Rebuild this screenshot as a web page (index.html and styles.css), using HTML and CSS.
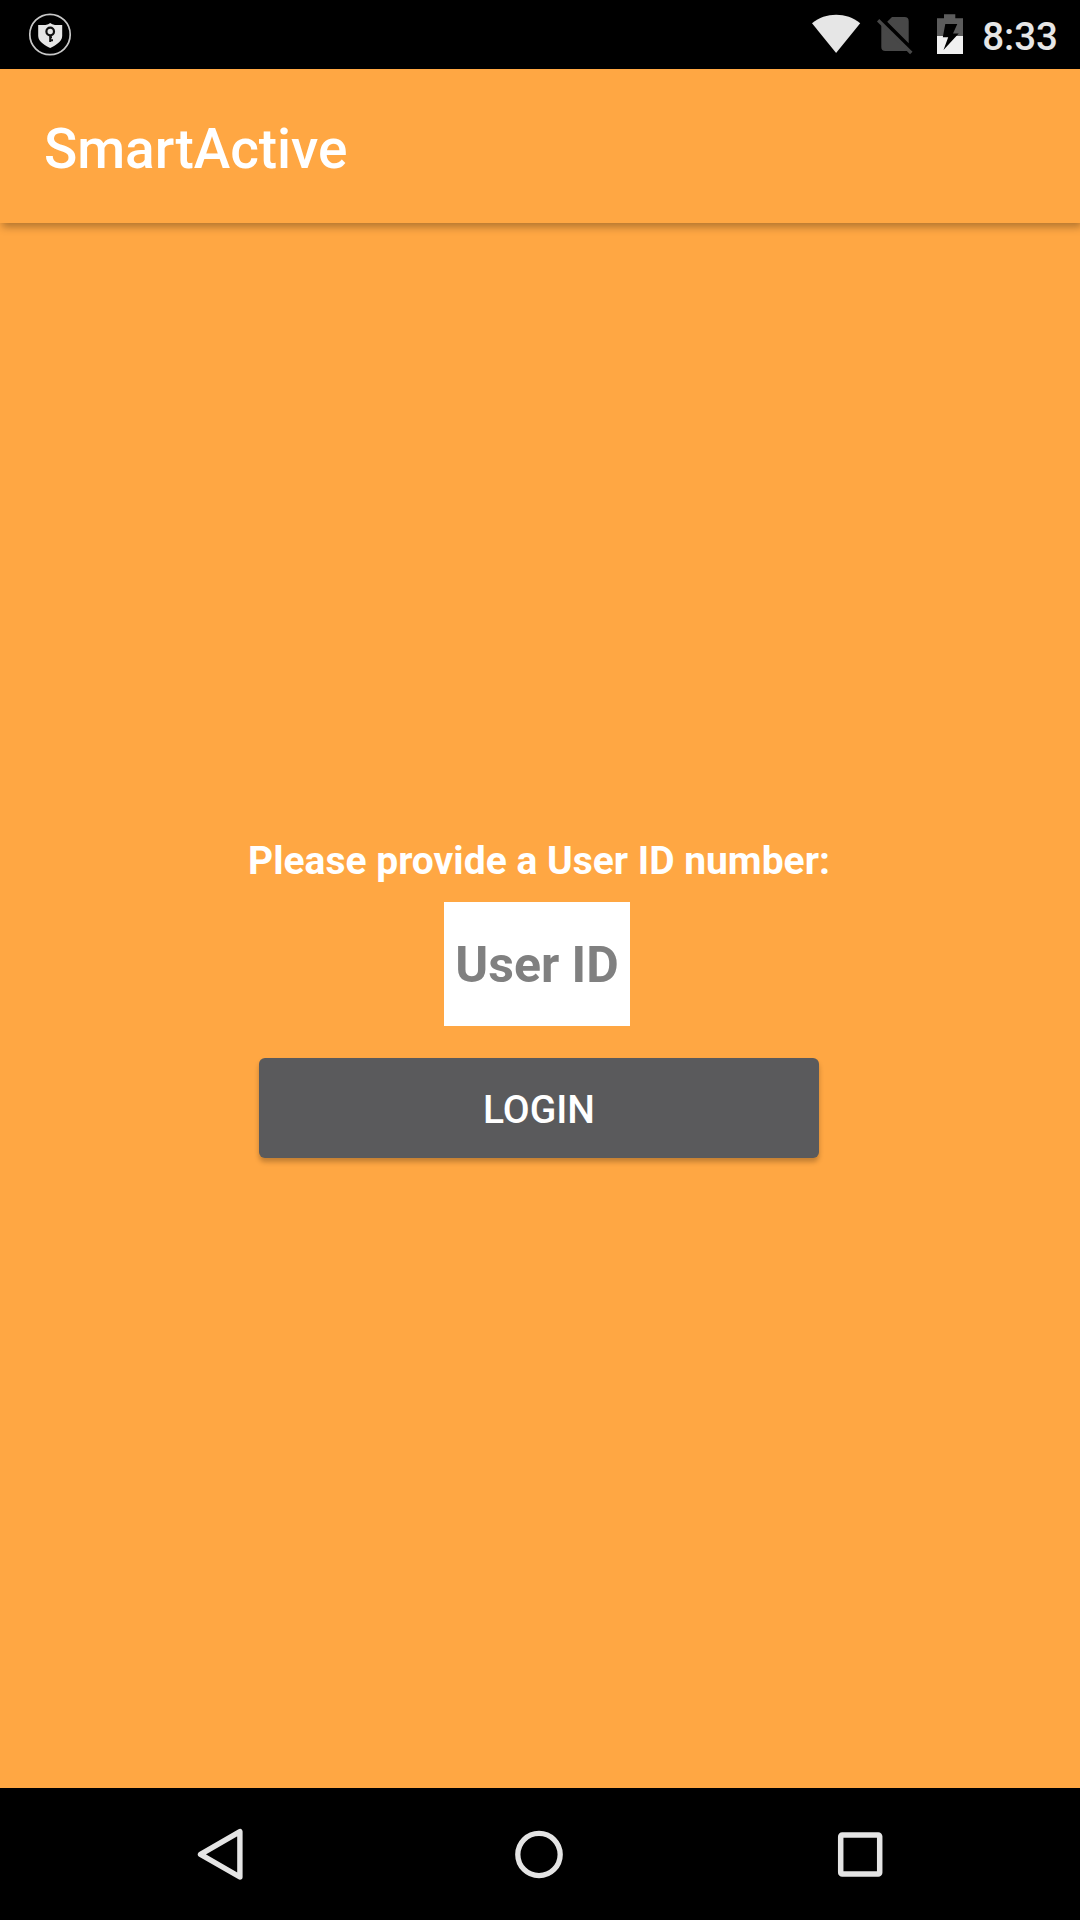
FILE: index.html
```html
<!DOCTYPE html>
<html lang="en">
<head>
<meta charset="utf-8">
<title>SmartActive</title>
<link rel="stylesheet" href="styles.css">
</head>
<body>
<div class="screen">
  <div class="status-bar">
    <svg class="icon-vpn" width="44" height="44" viewBox="28 12 44 44">
      <circle cx="50" cy="34.5" r="20.2" fill="none" stroke="#c8c8c8" stroke-width="1.7"/>
      <path d="M50.2 23 Q52 24.7 55 25 H62.2 V36 C62.2 42 54 46 50.2 48 C46.4 46 38.2 42 38.2 36 V25 H45.5 Q48.5 24.7 50.2 23Z" fill="#e6e6e6"/>
      <circle cx="50.2" cy="31.5" r="3.8" fill="none" stroke="#111" stroke-width="2.2"/>
      <path d="M50.2 35V42M50 40.3H53M50 37.3H52" fill="none" stroke="#111" stroke-width="2"/>
    </svg>
    <div class="status-icons">
      <svg width="49" height="40" viewBox="0 0 49 40">
        <path d="M0 9.2C7 3.5 15.3 .7 24.1 .7S41.2 3.5 48.2 9.2L24.1 39Z" fill="#e6e6e6"/>
      </svg>
      <svg class="icon-sim" width="36" height="40" viewBox="877 15 36 40">
        <path d="M892 17H904.500Q908.700 17 908.700 21.200V43.200L887.200 21.800ZM881.300 23.500 908.500 50.500Q907 51 905 51H885.300Q881.300 51 881.300 47Z" fill="#484848"/>
        <path d="M878.100 20.300 911.300 53" fill="none" stroke="#484848" stroke-width="3.400"/>
      </svg>
      <svg class="icon-battery" width="27" height="40" viewBox="937 14 27 40">
        <path d="M944 14.300H955.300V18.300H963V36H937V18.300H944Z" fill="#5c5c5c"/>
        <path d="M937 36H963V54H937Z" fill="#f0f0f0"/>
        <path d="M945.300 24H957.300L953 33.500H958.700L943.500 50L948.200 37.300H942.800Z" fill="#000"/>
      </svg>
      <span class="clock">8:33</span>
    </div>
  </div>
  <header class="app-bar"><h1 class="app-title">SmartActive</h1></header>
  <main class="content">
    <form class="login-form">
      <label class="prompt" for="user-id">Please provide a User ID number:</label>
      <input class="user-id" id="user-id" type="text" placeholder="User ID">
      <button class="login-button" type="button">LOGIN</button>
    </form>
  </main>
  <nav class="nav-bar">
    <svg width="60" height="60" viewBox="0 0 60 60"><path d="M43.900 7.600V53L4.500 30.400Z" fill="none" stroke="#e4e4e4" stroke-width="5.400" stroke-linejoin="round"/></svg>
    <svg width="60" height="60" viewBox="0 0 60 60"><circle cx="30" cy="30.500" r="21.200" fill="none" stroke="#e4e4e4" stroke-width="5.300"/></svg>
    <svg width="60" height="60" viewBox="0 0 60 60"><rect x="10.700" y="11" width="39" height="39" rx="1.500" fill="none" stroke="#e4e4e4" stroke-width="5.500"/></svg>
  </nav>
</div>
</body>
</html>
```
FILE: styles.css
```css
* {
  box-sizing: border-box;
}

body {
  margin: 0;
  font-family: Roboto, sans-serif;
}

.screen {
  display: flex;
  flex-direction: column;
  width: 1080px;
  height: 1920px;
  overflow: hidden;
  background: #ffa743;
}

.status-bar {
  display: flex;
  justify-content: space-between;
  height: 69px;
  padding: 12px 22px 0 28px;
  background: #000;
}

.status-icons {
  display: flex;
  align-items: flex-start;
  padding-top: 2px;
}

.icon-sim {
  margin: 1px 24px 0 16px;
}

.clock {
  margin: 0 0 0 18px;
  color: #e6e6e6;
  font-size: 38.5px;
  font-weight: 500;
  line-height: 45px;
}

.app-bar {
  z-index: 1;
  display: flex;
  align-items: center;
  height: 154px;
  padding: 6px 44px 0;
  background: #ffa743;
  box-shadow: 2px 4px 8px rgba(0, 0, 0, 0.3);
}

.app-title {
  margin: 0;
  color: #fff;
  font-size: 55px;
  font-weight: 500;
  letter-spacing: -0.05px;
  line-height: 64px;
}

.content {
  flex: 1;
  padding-top: 616px;
}

.login-form {
  display: flex;
  flex-direction: column;
  align-items: center;
}

.prompt {
  margin-right: 2px;
  color: #fff;
  font-size: 39px;
  font-weight: 700;
  line-height: 45px;
}

.user-id {
  width: 186px;
  height: 124px;
  margin: 18px 6px 0 0;
  padding: 2px 0 0;
  border: 0;
  border-radius: 0;
  background: #fff;
  font: 700 50px Roboto, sans-serif;
  text-align: center;
}

.user-id::placeholder {
  color: #808080;
  opacity: 1;
}

.login-button {
  width: 560px;
  height: 100px;
  margin: 32px 2px 0 0;
  padding: 4px 0 0;
  border: 0;
  border-radius: 6px;
  background: #5a5a5c;
  box-shadow: 0 4px 5px rgba(0, 0, 0, 0.24);
  color: #fff;
  font: 500 39px Roboto, sans-serif;
}

.nav-bar {
  display: grid;
  grid-template-columns: 60px 60px 60px;
  align-items: center;
  column-gap: 257px;
  height: 132px;
  padding-left: 196px;
  background: #000;
}

.nav-bar svg:nth-child(2) {
  margin-left: -4px;
}
```
